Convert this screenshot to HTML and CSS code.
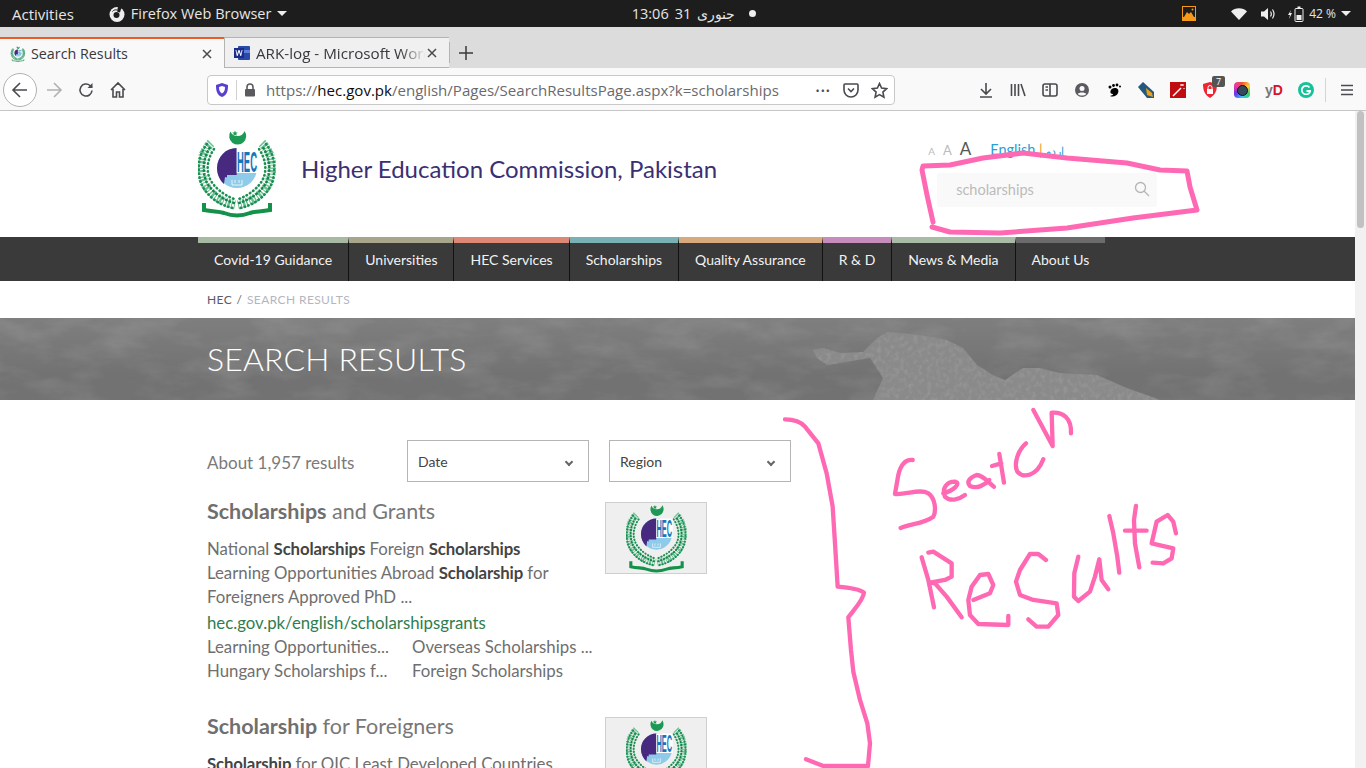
FILE: index.html
```html
<!DOCTYPE html>
<html lang="en">
<head>
    <meta charset="UTF-8">
    <title>Search Results</title>
    <link rel="stylesheet" href="styles.css">
</head>
<body>
    <svg class="defs" width="0" height="0">
        <symbol id="hecLogo" viewBox="0 0 78 90">
            <!-- crescent and star -->
            <path d="M32.500 3.500A8.500 8.500 0 1 0 46.500 3A7.500 7.500 0 0 1 32.500 3.500z" fill="#1c9a55"/>
            <path d="M37 2.500l.8 1.900 2 .1-1.500 1.300.5 2-1.800-1.100-1.800 1.100.5-2-1.500-1.300 2-.1z" fill="#1c9a55"/>
            <!-- wreath -->
            <path d="M13 15C2 26 1 42 6 54c5 12 17 20 31 23" class="wreath"/>
            <path d="M64 15c11 11 12 27 7 39-5 12-17 20-31 23" class="wreath"/>
            <path d="M9 16C0 27-1 43 3 55c5 12 17 22 32 25" class="leafRow"/>
            <path d="M68 16c9 11 10 27 6 39-5 12-17 22-32 25" class="leafRow"/>
            <path d="M13 18C5 29 4 42 8 53c5 10 15 18 28 22" class="leafRow leafMid"/>
            <path d="M64 18c8 11 9 24 5 35-5 10-15 18-28 22" class="leafRow leafMid"/>
            <path d="M16 21C9 31 8 43 12 51c4 8 12 15 24 20" class="leafRow"/>
            <path d="M61 21c7 10 8 22 4 30-4 8-12 15-24 20" class="leafRow"/>
            <!-- ribbon -->
            <path d="M6 75v7c10 2 14 1 20 3 8 3 18 3 26 0 6-2 10-1 20-3v-7" fill="none" stroke="#14924a" stroke-width="4"/>
            <!-- seal -->
            <circle cx="39" cy="40" r="20" fill="#8ecbea"/>
            <path d="M38.700 20A20 20 0 0 0 19 40c0 6 2.500 12 7 16l1-7 2 .5v-2.500h9.700z" fill="#472a80"/>
            <rect x="38.700" y="20" width="21" height="25" fill="#fff"/>
            <text x="39" y="44" class="logoText" textLength="20" lengthAdjust="spacingAndGlyphs">HEC</text>
            <path d="M34 52v5h10v-5M37 52v3M41 52v3" fill="none" stroke="#fff" stroke-width=".8"/>
        </symbol>
    </svg>

    <div class="topbar">
        <div class="topLeft">
            <span class="activities">Activities</span>
            <span class="appMenu">
                <svg width="16" height="16" viewBox="0 0 16 16"><circle cx="8" cy="8.500" r="7.500" fill="#eee"/><circle cx="7.500" cy="9" r="3" fill="#1d1d1d"/><path d="M9 .5l3.500 1-1.500 5-3-1z" fill="#1d1d1d"/><path d="M3.500 5.500c1-1.500 3-2 4.500-1.500" stroke="#1d1d1d" fill="none"/></svg>
                Firefox Web Browser
                <i class="caret"></i>
            </span>
        </div>
        <div class="clock"><span>13:06</span><span>31</span><span class="clockMonth" dir="rtl">جنوری</span><i class="dot"></i></div>
        <div class="tray">
            <svg width="14" height="15" viewBox="0 0 14 15"><rect width="14" height="15" fill="#f79a17"/><rect x="1" y="1" width="12" height="10" fill="#1d1d1d"/><path d="M2 11l3-5 2 2 2-2 3 5z" fill="#f79a17"/><circle cx="10.500" cy="3.500" r="1" fill="#f79a17"/></svg>
            <svg class="wifi" width="16" height="12" viewBox="0 0 16 12"><path d="M0 3.500C4-.8 12-.8 16 3.500L8 12z" fill="#eee"/></svg>
            <svg class="vol" width="15" height="14" viewBox="0 0 15 14"><path d="M0 4.500h3L7 1v12L3 9.500H0z" fill="#eee"/><path d="M9.500 4.500c1 1.500 1 3.500 0 5M11.500 2.500c2 3 2 6 0 9" fill="none" stroke="#eee" stroke-width="1.200"/></svg>
            <svg class="batt" width="16" height="16" viewBox="0 0 16 16"><path d="M3 4L0 9h2l-1 4 3-6H2z" fill="#eee"/><rect x="7" y="2.500" width="8" height="13" rx="1" fill="none" stroke="#eee"/><rect x="9.500" y=".5" width="3" height="2" fill="#eee"/><rect x="8.500" y="9" width="5" height="5" fill="#eee"/></svg>
            <span class="battText">42 %</span>
            <i class="caret"></i>
        </div>
    </div>

    <div class="tabstrip">
        <div class="tab tabActive">
            <svg class="tabIcon" width="16" height="16"><use href="#hecLogo"/></svg>
            <span class="tabTitle">Search Results</span>
            <svg class="tabClose" width="12" height="12" viewBox="0 0 12 12"><path d="M2 2l8 8M10 2l-8 8"/></svg>
        </div>
        <div class="tab tabOther">
            <svg class="tabIcon" width="16" height="16" viewBox="0 0 16 16"><rect x="4" y="1" width="12" height="14" rx="1" fill="#2b4aa8"/><rect x="10" y="5" width="6" height="3" fill="#5d7fdc"/><rect y="3" width="10" height="10" fill="#1a2d8c"/><path d="M1.500 5l1.300 6h.8L5 7l1.400 4h.8l1.300-6H7.600l-.7 4L5.500 5h-1L3.100 9l-.7-4z" fill="#fff"/></svg>
            <span class="tabTitle tabFade">ARK-log - Microsoft Word</span>
            <svg class="tabClose" width="12" height="12" viewBox="0 0 12 12"><path d="M2 2l8 8M10 2l-8 8"/></svg>
        </div>
        <div class="tabSep"></div>
        <svg class="tabPlus" width="16" height="16" viewBox="0 0 16 16"><path d="M8 1v14M1 8h14"/></svg>
    </div>

    <div class="toolbar">
        <div class="backBtn">
            <svg width="18" height="18" viewBox="0 0 18 18"><path d="M16 9H2M9 2L2 9l7 7" class="tool"/></svg>
        </div>
        <svg class="toolFwd" width="18" height="18" viewBox="0 0 18 18"><path d="M2 9h14M9 2l7 7-7 7" class="tool toolOff"/></svg>
        <svg class="toolGap" width="18" height="18" viewBox="0 0 18 18"><path d="M15 9.500a6 6 0 1 1-2-5l2 2" class="tool"/><path d="M15.500 2v5h-5z" fill="#4a4a4f"/></svg>
        <svg class="toolGap" width="18" height="18" viewBox="0 0 18 18"><path d="M2 9l7-7 7 7M4 8v8h3.500v-5h3v5H14V8" class="tool"/></svg>
        <div class="urlbar">
            <svg width="14" height="16" viewBox="0 0 14 16"><path d="M7 1l6 2c0 6-1 10-6 12C2 13 1 9 1 3z" fill="#5a3fd0"/><path d="M7 4l3 1c0 3-.5 5-3 6.500C4.500 10 4 8 4 5z" fill="#fff"/></svg>
            <i class="urlSep"></i>
            <svg width="12" height="14" viewBox="0 0 12 14"><path d="M3 6V4a3 3 0 0 1 6 0v2" fill="none" stroke="#5b5b5f" stroke-width="1.600"/><rect x="1" y="6" width="10" height="7.500" rx="1" fill="#5b5b5f"/></svg>
            <span class="urlText">https://<b>hec.gov.pk</b>/english/Pages/SearchResultsPage.aspx?k=scholarships</span>
            <span class="urlDots">•••</span>
            <svg class="urlEnd" width="16" height="16" viewBox="0 0 16 16"><path d="M2 2h12a1 1 0 0 1 1 1v5a7 7 0 0 1-14 0V3a1 1 0 0 1 1-1z" class="tool"/><path d="M5 6.500l3 3 3-3" class="tool"/></svg>
            <svg class="urlEnd" width="17" height="17" viewBox="0 0 17 17"><path d="M8.500 1.500l2.100 4.600 5 .6-3.700 3.400 1 5-4.400-2.500-4.400 2.500 1-5L1.400 6.700l5-.6z" class="tool"/></svg>
        </div>
        <div class="addons">
            <svg width="16" height="16" viewBox="0 0 16 16"><path d="M8 1v10M3 7l5 5 5-5M2 15h12" class="tool"/></svg>
            <svg width="16" height="16" viewBox="0 0 16 16"><path d="M1.500 2v12M5 2v12M8.500 2v12M11 2l4 12" class="tool"/></svg>
            <svg width="16" height="14" viewBox="0 0 16 14"><rect x="1" y="1" width="14" height="12" rx="2" class="tool"/><path d="M8 1v12M3.500 4H6M3.500 7H6" class="tool"/></svg>
            <svg width="14" height="14" viewBox="0 0 14 14"><circle cx="7" cy="7" r="7" fill="#5b5b5f"/><circle cx="7" cy="5.500" r="2.500" fill="#f9f9fa"/><path d="M2.800 11c1-2 7.400-2 8.400 0-2 2-6.400 2-8.400 0z" fill="#f9f9fa"/></svg>
            <svg width="14" height="15" viewBox="0 0 14 15"><path d="M8 5c3 0 4 2.500 3 5-1 3-5 4.500-8 3 2-.5 3-1 3-2-2 0-3-1-2.500-3C4 6 6 5 8 5z" fill="#000"/><circle cx="3" cy="4" r="1.500" fill="#000"/><circle cx="6.500" cy="2.500" r="1.400" fill="#000"/><circle cx="10" cy="2" r="1.400" fill="#000"/><circle cx="13" cy="3.500" r="1" fill="#000"/></svg>
            <svg width="17" height="16" viewBox="0 0 17 16"><path d="M0 5l5-5 11 10v6H9z" fill="#25587e"/><path d="M8 6l6 5 1 4-6-2z" fill="#e9a11c"/></svg>
            <svg width="16" height="16" viewBox="0 0 16 16"><rect width="16" height="16" fill="#bf0d12"/><path d="M3 14l8-8" stroke="#fff" stroke-width="1.500"/><path d="M12 2v2M10 3h4M14 6v1" stroke="#fff"/></svg>
            <span class="shieldWrap">
                <svg width="14" height="16" viewBox="0 0 14 16"><path d="M7 0l7 2c0 7-2 11-7 14C2 13 0 9 0 2z" fill="#ef2530"/><rect x="4" y="7" width="6" height="5" fill="#fff"/><path d="M5 7V5.500a2 2 0 0 1 4 0V7" stroke="#fff" fill="none"/></svg>
                <span class="badge">7</span>
            </span>
            <span class="ringIcon"><i></i></span>
            <span class="ydIcon">y<b>D</b></span>
            <span class="gramIcon">
                <svg width="10" height="10" viewBox="0 0 10 10"><path d="M8.500 2.500A4.300 4.300 0 1 0 9.300 6H5.500" fill="none" stroke="#fff" stroke-width="1.800"/></svg>
            </span>
        </div>
        <i class="toolSep"></i>
        <svg class="hamburger" width="14" height="12" viewBox="0 0 14 12"><path d="M1 1.500h12M1 6h12M1 10.500h12" class="tool"/></svg>
    </div>

    <div class="viewport">
        <div class="page">
            <header class="siteHeader">
                <svg class="siteLogo" width="78" height="90"><use href="#hecLogo"/></svg>
                <h1 class="siteName">Higher Education Commission, Pakistan</h1>
                <div class="headTools">
                    <div class="langRow">
                        <span class="sizeA sizeS">A</span>
                        <span class="sizeA sizeM">A</span>
                        <span class="sizeA sizeL">A</span>
                        <span class="lang">English <em>|</em> <span class="langUr" dir="rtl">اردو</span></span>
                    </div>
                    <div class="searchBox">
                        <span>scholarships</span>
                        <svg width="16" height="16" viewBox="0 0 16 16"><circle cx="6.500" cy="6.500" r="5" fill="none" stroke="#b5b5b5" stroke-width="1.300"/><path d="M10 10l5 5" stroke="#b5b5b5" stroke-width="1.300"/></svg>
                    </div>
                </div>
            </header>

            <nav class="mainNav">
                <a class="navItem nav1">Covid-19 Guidance</a>
                <a class="navItem nav2">Universities</a>
                <a class="navItem nav3">HEC Services</a>
                <a class="navItem nav4">Scholarships</a>
                <a class="navItem nav5">Quality Assurance</a>
                <a class="navItem nav6">R &amp; D</a>
                <a class="navItem nav7">News &amp; Media</a>
                <a class="navItem nav8">About Us</a>
            </nav>

            <div class="crumbs"><span class="crumbHome">HEC</span> <span class="crumbSlash">/</span> SEARCH RESULTS</div>

            <div class="banner">
                <svg class="bannerArt" width="1355" height="82" viewBox="0 0 1355 82">
                    <defs>
                        <linearGradient id="bannerShade" x1="0" y1="0" x2="0" y2="1">
                            <stop offset="0" stop-color="#fff" stop-opacity=".09"/>
                            <stop offset=".7" stop-color="#fff" stop-opacity="0"/>
                        </linearGradient>
                    </defs>
                    <filter id="grain" x="0" y="0" width="100%" height="100%"><feTurbulence type="fractalNoise" baseFrequency="0.02 0.05" numOctaves="5" seed="12"/><feColorMatrix values="0 0 0 0 1  0 0 0 0 1  0 0 0 0 1  1.300 0 0 0 -0.520"/></filter>
                    <filter id="rockGrain"><feTurbulence type="fractalNoise" baseFrequency="0.22 0.2" numOctaves="3" seed="9"/><feColorMatrix values="0 0 0 0 0.3  0 0 0 0 0.3  0 0 0 0 0.3  2.600 0 0 0 -1.150"/><feComposite in2="SourceAlpha" operator="in"/></filter>
                    <rect width="1355" height="82" filter="url(#grain)" opacity=".16"/>
                    <rect width="1355" height="82" fill="url(#bannerShade)"/>
                    <path class="rock" d="M813 32L823 30L840 35L863 34L877 20L888 14L920 17L947 22L963 30L977 47L993 57L1005 62L1023 50L1040 50L1060 55L1097 57L1127 70L1160 82H873L883 60L870 40L827 47L817 40z"/>
                    <path d="M813 32L823 30L840 35L863 34L877 20L888 14L920 17L947 22L963 30L977 47L993 57L1005 62L1023 50L1040 50L1060 55L1097 57L1127 70L1160 82H873L883 60L870 40L827 47L817 40z" filter="url(#rockGrain)"/>
                </svg>
                <h2 class="bannerTitle">SEARCH RESULTS</h2>
            </div>

            <main class="results">
                <div class="filterRow">
                    <div class="resultCount">About 1,957 results</div>
                    <div class="dropdown"><span>Date</span><i class="chev"></i></div>
                    <div class="dropdown dropRegion"><span>Region</span><i class="chev"></i></div>
                </div>

                <article class="result">
                    <div class="resultBody">
                        <h3 class="resultTitle"><b>Scholarships</b> and Grants</h3>
                        <p class="resultText">National <b>Scholarships</b> Foreign <b>Scholarships</b> Learning Opportunities Abroad <b>Scholarship</b> for Foreigners Approved PhD ...</p>
                        <div class="resultUrl">hec.gov.pk/english/scholarshipsgrants</div>
                        <div class="deepLinks">
                            <span>Learning Opportunities...</span><span>Overseas Scholarships ...</span>
                            <span>Hungary Scholarships f...</span><span>Foreign Scholarships</span>
                        </div>
                    </div>
                    <div class="thumb"><svg width="61" height="70"><use href="#hecLogo"/></svg></div>
                </article>

                <article class="result">
                    <div class="resultBody">
                        <h3 class="resultTitle"><b>Scholarship</b> for Foreigners</h3>
                        <p class="resultText"><b>Scholarship</b> for OIC Least Developed Countries</p>
                    </div>
                    <div class="thumb"><svg width="61" height="70"><use href="#hecLogo"/></svg></div>
                </article>
            </main>
        </div>
        <div class="scrollbar"><i></i></div>

        <svg class="scribble" width="1366" height="657" viewBox="0 111 1366 657">
            <path d="M933 222L927 195L922 170L923 166L950 165L983 158L1023 153L1067 158L1127 163L1160 170L1187 171L1190 187L1197 210L1133 218L1067 228L1000 233L950 232L932 227"/>
            <g transform="translate(780 400) scale(.3333)" class="scribbleBig">
                <path d="M15 58C40 58 60 62 75 80L115 130L140 220L158 320L165 430L173 560C200 562 235 565 252 578C250 600 225 625 205 652L213 750L220 815L240 900L262 970L270 1030L264 1098L130 1098L78 1078"/>
                <path d="M398 180C375 178 362 195 355 225L345 282C380 285 420 265 445 280C465 295 470 330 460 350C430 372 395 370 362 384"/>
                <path d="M490 280C520 272 545 250 525 245C500 245 485 265 495 290C510 305 535 300 555 285"/>
                <path d="M642 260C625 248 610 225 590 225C570 232 558 245 570 258C590 268 615 255 628 240"/>
                <path d="M658 162L672 248M636 198L664 190"/>
                <path d="M738 130C715 150 700 190 712 215C730 235 770 230 790 178"/>
                <path d="M760 30L818 138L815 38C850 35 875 55 873 100"/>
                <path d="M425 472L445 540L462 622"/>
                <path d="M445 458L460 455L515 490L515 530L495 540L450 548L465 550L500 590L545 652"/>
                <path d="M580 600L630 580L640 555L625 522L600 525L575 560L565 600L570 645L595 672L685 675L685 648"/>
                <path d="M798 480L775 462L750 462L720 510L708 545L720 585L760 600L830 610L835 645L805 680L770 680L745 658"/>
                <path d="M895 470L883 520L882 590L895 603L930 575L945 530L958 478L965 540L985 568"/>
                <path d="M988 348L1000 400L1012 470L1018 518"/>
                <path d="M1068 318L1062 360L1065 430L1078 502M1035 392L1100 392"/>
                <path d="M1188 400L1180 365L1163 345L1130 365L1115 430L1180 445L1175 475L1150 490L1118 488"/>
            </g>
        </svg>
    </div>
</body>
</html>
```

FILE: styles.css
```css
* {
    box-sizing: border-box;
}

html, body {
    margin: 0;
    height: 768px;
    overflow: hidden;
}

body {
    font-family: "Open Sans", sans-serif;
    background: #fff;
}

.defs {
    position: absolute;
}

.wreath {
    fill: none;
    stroke: #6cc095;
    stroke-width: 9;
    stroke-dasharray: 1.500 1 2.500 1.200 1 1.800;
}

.leafRow {
    fill: none;
    stroke: #1c8f52;
    stroke-width: 2.600;
    stroke-linecap: round;
    stroke-dasharray: .5 3.400;
}

.leafMid {
    stroke: #17854a;
    stroke-dashoffset: 1.500;
}

.logoText {
    font-family: "Liberation Sans", sans-serif;
    font-size: 30px;
    font-weight: bold;
    fill: #1676bc;
}

/* Ubuntu top bar */
.topbar {
    height: 27px;
    background: #1d1d1d;
    color: #e6e6e6;
    font-size: 14.500px;
    display: grid;
    grid-template-columns: 1fr auto 1fr;
    align-items: center;
    padding: 0 15px 0 12px;
}

.topLeft {
    display: flex;
    align-items: center;
    gap: 35px;
}

.activities {
    font-size: 15px;
}

.appMenu {
    display: flex;
    align-items: center;
    gap: 6px;
}

.caret {
    display: inline-block;
    border-left: 5px solid transparent;
    border-right: 5px solid transparent;
    border-top: 5px solid #eee;
}

.clock {
    display: flex;
    align-items: center;
    gap: 6px;
    padding-left: 25px;
}

.clockMonth {
    font-size: 13.500px;
}

.dot {
    width: 7px;
    height: 7px;
    border-radius: 50%;
    background: #eee;
    margin-left: 8px;
}

.tray {
    display: flex;
    justify-content: flex-end;
    align-items: center;
}

.wifi {
    margin-left: 35px;
}

.vol {
    margin-left: 14px;
}

.batt {
    margin-left: 12px;
}

.battText {
    font-size: 12px;
    margin: 0 5px 0 5px;
}

/* Firefox tabs and toolbar */
.tabstrip {
    height: 41px;
    background: #dcdcdc;
    padding-top: 10px;
    display: flex;
    align-items: stretch;
    font-size: 14.300px;
    color: #38383d;
}

.tab {
    display: flex;
    align-items: center;
    border-top: 1px solid #b4b4b4;
}

.tabActive {
    width: 224px;
    background: #f9f9fa;
    border-top: 2px solid #ec5b2b;
    padding: 0 11px 0 10px;
}

.tabOther {
    width: 225px;
    padding: 1px 11px 0 9px;
    background: #f0f0f0;
    border-left: 1px solid #b4b4b4;
    border-bottom: 1px solid #b4b4b4;
}

.tabIcon {
    flex: none;
}

.tabTitle {
    flex: 1;
    margin-left: 5px;
    white-space: nowrap;
    overflow: hidden;
}

.tabFade {
    margin-left: 6px;
    font-size: 15.200px;
    -webkit-mask-image: linear-gradient(to right, #000 85%, transparent);
    mask-image: linear-gradient(to right, #000 85%, transparent);
}

.tabClose {
    flex: none;
    fill: none;
    stroke: #4a4a4f;
    stroke-width: 1.500;
}

.tabSep {
    width: 1px;
    margin: 5px 0 5px 0;
    background: #b4b4b4;
}

.tabPlus {
    margin: 8px 0 0 8px;
    fill: none;
    stroke: #38383d;
    stroke-width: 1.500;
}

.toolbar {
    height: 43px;
    background: #f9f9fa;
    border-bottom: 1px solid #c6c6c6;
    display: flex;
    align-items: center;
    padding: 2px 0 0 3px;
}

.tool {
    fill: none;
    stroke: #4a4a4f;
    stroke-width: 1.600;
}

.toolOff {
    stroke: #b1b1b3;
}

.backBtn {
    width: 34px;
    height: 34px;
    border: 1px solid #b1b1b3;
    border-radius: 50%;
    background: #fff;
    display: flex;
    align-items: center;
    justify-content: center;
}

.toolFwd {
    margin-left: 8px;
    flex: none;
}

.toolGap {
    margin-left: 14px;
    flex: none;
}

.urlbar {
    width: 688px;
    height: 30px;
    margin-left: 80px;
    background: #fff;
    border: 1px solid #c8c8c8;
    border-radius: 4px;
    display: flex;
    align-items: center;
    padding: 0 6px 0 7px;
    gap: 7px;
}

.urlSep {
    width: 1px;
    height: 20px;
    background: #d0d0d0;
}

.urlText {
    flex: 1;
    margin-left: 3px;
    font-size: 15.050px;
    color: #6a6a6e;
    white-space: nowrap;
    overflow: hidden;
}

.urlText b {
    font-weight: normal;
    color: #0c0c0d;
}

.urlDots {
    font-size: 11px;
    color: #4a4a4f;
    letter-spacing: 1px;
}

.urlEnd {
    margin-left: 5px;
}

.addons {
    display: grid;
    grid-auto-flow: column;
    grid-auto-columns: 32px;
    justify-items: center;
    align-items: center;
    margin-left: 75px;
}

.shieldWrap {
    position: relative;
    display: flex;
}

.badge {
    position: absolute;
    left: 9px;
    top: -6px;
    width: 13px;
    height: 11px;
    background: #555;
    border-radius: 2px;
    color: #fff;
    font-size: 9px;
    line-height: 11px;
    text-align: center;
}

.ringIcon {
    width: 16px;
    height: 16px;
    border-radius: 4px;
    background: conic-gradient(#e53, #fc3, #3c6, #3cf, #63e, #e3a, #e53);
    display: flex;
    align-items: center;
    justify-content: center;
}

.ringIcon i {
    width: 11px;
    height: 11px;
    border-radius: 50%;
    background: #36495c;
    border: 1px solid #111;
}

.ydIcon {
    font-family: "Liberation Sans", sans-serif;
    font-size: 14px;
    font-weight: bold;
    color: #777;
}

.ydIcon b {
    color: #d8112a;
}

.gramIcon {
    width: 16px;
    height: 16px;
    border-radius: 50%;
    background: #15c39a;
    display: flex;
    align-items: center;
    justify-content: center;
}

.toolSep {
    width: 1px;
    height: 24px;
    background: #d4d4d4;
    margin-left: 3px;
}

.hamburger {
    margin-left: 14px;
}

/* Page under the browser chrome */
.viewport {
    position: relative;
    height: 657px;
    display: flex;
    overflow: hidden;
}

.page {
    flex: 1;
    min-width: 0;
    background: #fff;
    font-family: Lato, sans-serif;
    overflow: hidden;
}

.scrollbar {
    width: 11px;
    background: #f1f1f1;
    padding: 0 2px;
}

.scrollbar i {
    display: block;
    width: 7px;
    height: 117px;
    background: #c1c1c1;
    border-radius: 4px;
}

.scribble {
    position: absolute;
    left: 0;
    top: 0;
    fill: none;
    stroke: #ff69b4;
    stroke-width: 5;
    stroke-linecap: round;
    stroke-linejoin: round;
    pointer-events: none;
}

.scribbleBig {
    stroke-width: 13;
}

.siteHeader {
    height: 126px;
    padding-left: 198px;
    display: flex;
    align-items: center;
}

.siteLogo {
    margin-top: -2px;
}

.siteName {
    margin: 0 0 12px 25px;
    font-size: 24px;
    font-weight: normal;
    color: #3b2f73;
    white-space: nowrap;
}

.headTools {
    margin-left: 211px;
    width: 230px;
    align-self: flex-start;
    padding-top: 27px;
}

.langRow {
    display: flex;
    align-items: baseline;
    height: 22px;
}

.sizeA {
    color: #bbb;
    margin-right: 8px;
}

.sizeS {
    font-size: 10px;
}

.sizeM {
    font-size: 13px;
}

.sizeL {
    font-size: 17px;
    color: #555;
}

.lang {
    margin-left: 11px;
    font-size: 14.500px;
    color: #2a9fd6;
    white-space: nowrap;
}

.lang em {
    font-style: normal;
    color: #f0982a;
}

.langUr {
    font-size: 11px;
}

.searchBox {
    width: 220px;
    height: 34px;
    margin: 13px 0 0 9px;
    background: #f9f9f9;
    border-radius: 3px;
    display: flex;
    align-items: center;
    justify-content: space-between;
    padding: 0 7px 2px 19px;
    font-size: 14.500px;
    color: #bbb;
}

.mainNav {
    height: 44px;
    background: #3a3a3a;
    padding-left: 198px;
    display: flex;
}

.navItem {
    border-top: 6px solid #999;
    border-right: 1px solid #111;
    color: #f2f2f2;
    font-size: 14px;
    padding: 8px 16px 0 16px;
    white-space: nowrap;
}

.nav1 { border-top-color: #a8b9a3; }
.nav2 { border-top-color: #a8a58c; }
.nav3 { border-top-color: #dc8875; }
.nav4 { border-top-color: #78b0b3; }
.nav5 { border-top-color: #d6aa7d; }
.nav6 { border-top-color: #c58cbc; }
.nav7 { border-top-color: #a9bba6; }
.nav8 { border-top-color: #6b6b6b; border-right: none; }

.crumbs {
    height: 37px;
    padding-left: 207px;
    font-size: 12px;
    line-height: 37px;
    color: #b5b5c0;
    letter-spacing: .4px;
}

.crumbHome {
    color: #5a5a68;
}

.crumbSlash {
    color: #666;
    margin: 0 1px;
}

.banner {
    position: relative;
    height: 82px;
    background: #727272;
    overflow: hidden;
}

.bannerArt {
    position: absolute;
    left: 0;
    top: 0;
}

.rock {
    fill: #8a8a8a;
}

.bannerTitle {
    position: relative;
    margin: 0;
    padding: 21px 0 0 207px;
    font-size: 32px;
    line-height: 40px;
    font-weight: 300;
    letter-spacing: .15px;
    color: #fff;
}

.results {
    width: 600px;
    margin-left: 207px;
    padding-top: 40px;
    color: #6f6f6f;
}

.filterRow {
    display: flex;
    align-items: center;
    height: 42px;
    margin-bottom: 20px;
}

.resultCount {
    width: 200px;
    padding-top: 2px;
    font-size: 17px;
    color: #7a7a7a;
}

.dropdown {
    width: 182px;
    height: 42px;
    border: 1px solid #b5b5b5;
    display: flex;
    align-items: center;
    justify-content: space-between;
    padding: 0 16px 0 10px;
    font-size: 14px;
    color: #444;
}

.dropRegion {
    margin-left: 20px;
}

.chev {
    width: 6px;
    height: 6px;
    margin-top: 1px;
    border-right: 2px solid #666;
    border-bottom: 2px solid #666;
    transform: rotate(45deg);
}

.result {
    display: flex;
    justify-content: space-between;
    width: 500px;
    height: 215px;
}

.resultBody {
    width: 390px;
}

.resultTitle {
    margin: 0 0 17px;
    font-size: 21.500px;
    line-height: 18px;
    font-weight: normal;
    color: #777;
}

.resultTitle b {
    font-weight: bold;
    color: #6f6f6f;
}

.resultText {
    width: 350px;
    margin: 0;
    font-size: 16.800px;
    line-height: 24px;
    white-space: normal;
}

.resultText b {
    font-weight: bold;
    color: #444;
    letter-spacing: -.15px;
}

.resultUrl {
    padding-top: 2px;
    font-size: 16.800px;
    line-height: 24px;
    color: #2f7d4f;
}

.deepLinks {
    display: grid;
    grid-template-columns: 205px auto;
    font-size: 16.800px;
    line-height: 24px;
    white-space: nowrap;
}

.thumb {
    width: 102px;
    height: 72px;
    background: #efefef;
    border: 1px solid #cfcfcf;
    display: flex;
    justify-content: center;
    align-items: center;
}
```
